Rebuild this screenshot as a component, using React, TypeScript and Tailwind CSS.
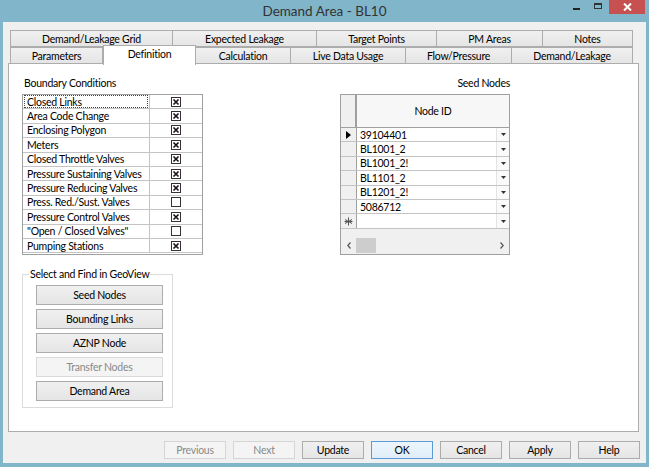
import React from "react";

const rowTabs = [
  { label: "Demand/Leakage Grid", w: 163 },
  { label: "Expected Leakage", w: 145 },
  { label: "Target Points", w: 121 },
  { label: "PM Areas", w: 107 },
  { label: "Notes", w: 91 },
];

const frontTabs = [
  { label: "Parameters", w: 93 },
  { label: "Definition", w: 93, active: true },
  { label: "Calculation", w: 96 },
  { label: "Live Data Usage", w: 116 },
  { label: "Flow/Pressure", w: 107 },
  { label: "Demand/Leakage", w: 122 },
];

const conditions: [string, boolean][] = [
  ["Closed Links", true],
  ["Area Code Change", true],
  ["Enclosing Polygon", true],
  ["Meters", true],
  ["Closed Throttle Valves", true],
  ["Pressure Sustaining Valves", true],
  ["Pressure Reducing Valves", true],
  ["Press. Red./Sust. Valves", false],
  ["Pressure Control Valves", true],
  ['"Open / Closed Valves"', false],
  ["Pumping Stations", true],
];

const seedNodes = ["39104401", "BL1001_2", "BL1001_2!", "BL1101_2", "BL1201_2!", "5086712"];

function CheckBox({ checked }: { checked: boolean }) {
  return (
    <svg width="10" height="10" viewBox="0 0 10 10">
      <rect x="0.5" y="0.5" width="9" height="9" fill="#fff" stroke="#333" />
      {checked && (
        <path d="M2.5 2.5 L7.5 7.5 M7.5 2.5 L2.5 7.5" stroke="#1a0a1a" strokeWidth="1.6" />
      )}
    </svg>
  );
}

function Tab({ label, w, active }: { label: string; w: number; active?: boolean }) {
  if (active) {
    return (
      <div
        className="relative z-10 -mt-[2px] -mb-[1px] flex h-[20px] items-start justify-center border border-b-0 border-[#ACACAC] bg-white pt-[1px]"
        style={{ width: w }}
      >
        {label}
      </div>
    );
  }
  return (
    <div
      className="-ml-px flex h-[17px] items-center justify-center border border-[#ACACAC] bg-gradient-to-b from-[#F0F0F0] to-[#E5E5E5] first:ml-0"
      style={{ width: w }}
    >
      {label}
    </div>
  );
}

function WinButton({ label, disabled, primary }: { label: string; disabled?: boolean; primary?: boolean }) {
  const cls = disabled
    ? "border-[#D5D5D5] bg-[#F4F4F4] text-[#8A8A8A]"
    : primary
      ? "border-[#5A9BD5] bg-gradient-to-b from-[#EDF5FC] to-[#E0EEF9] text-black"
      : "border-[#ACACAC] bg-gradient-to-b from-[#F0F0F0] to-[#E5E5E5] text-black";
  return (
    <div className={`flex h-[18px] w-[62px] items-center justify-center border ${cls}`}>{label}</div>
  );
}

function GroupButton({ label, disabled }: { label: string; disabled?: boolean }) {
  return (
    <div
      className={`flex h-[20px] w-[127px] items-center justify-center border ${
        disabled
          ? "border-[#D9D9D9] bg-[#F4F4F4] text-[#8A8A8A]"
          : "border-[#ACACAC] bg-gradient-to-b from-[#F0F0F0] to-[#E5E5E5] text-black"
      }`}
    >
      {label}
    </div>
  );
}

function DropArrow() {
  return (
    <div className="flex w-[13px] items-center justify-center border-l border-[#E3E3E3] bg-[#FAFAFA]">
      <svg width="5" height="3" viewBox="0 0 5 3">
        <path d="M0 0 H5 L2.5 3 Z" fill="#333" />
      </svg>
    </div>
  );
}

export default function App() {
  return (
    <div className="flex h-[467px] w-[649px] flex-col whitespace-nowrap bg-[#80B5CA] font-['Lato','Liberation_Sans',sans-serif] text-[10.5px] leading-[14px] tracking-[-0.25px] text-black">
      {/* title bar */}
      <div className="relative flex h-[22px] items-center justify-center">
        <span className="text-[13.5px] tracking-normal text-[#333]">Demand Area - BL10</span>
        <div className="absolute right-[4px] top-0 flex items-start">
          <div className="mt-[8px] h-[2px] w-[7px] bg-[#222]" />
          <div className="ml-[14px] mt-[3px] h-[6px] w-[8px] border border-t-2 border-[#333]" />
          <div className="ml-[7px] flex h-[14px] w-[36px] items-center justify-center bg-[#C75050]">
            <svg width="9" height="8" viewBox="0 0 9 8">
              <path d="M1 0.5 L8 7.5 M8 0.5 L1 7.5" stroke="#fff" strokeWidth="2" />
            </svg>
          </div>
        </div>
      </div>

      {/* client */}
      <div className="mx-[3px] mb-[4px] flex flex-1 flex-col bg-[#F0F0F0]">
        <div className="ml-[7px] mt-[8px] flex">
          {rowTabs.map((t) => (
            <Tab key={t.label} {...t} />
          ))}
        </div>
        <div className="ml-[7px] flex items-end">
          {frontTabs.map((t) => (
            <Tab key={t.label} {...t} />
          ))}
        </div>

        {/* tab page */}
        <div className="ml-[5px] -mt-px flex h-[369px] w-[631px] border border-[#ACACAC] bg-white pl-[13px] pt-[12px]">
          <div className="flex w-[181px] flex-col">
            <div className="pl-[2px]">Boundary Conditions</div>
            <div className="mt-[4px] flex flex-col border border-[#A0A0A0] pb-[1px]">
              {conditions.map(([name, on], i) => (
                <div key={name} className="flex h-[14.4px] border-b border-[#C4C4C4]">
                  <div className="flex w-[127px] items-center border-r border-[#C4C4C4] pl-[4px]">
                    {i === 0 ? (
                      <div className="-ml-[3px] flex h-full w-[124px] items-center border border-dotted border-[#444] pl-[2px]">
                        {name}
                      </div>
                    ) : (
                      name
                    )}
                  </div>
                  <div className="flex flex-1 items-center justify-center">
                    <CheckBox checked={on} />
                  </div>
                </div>
              ))}
            </div>

            <fieldset className="mt-[12px] w-[151px] border border-[#DCDCDC] pb-[6px]">
              <legend className="ml-[6px] px-[1px] leading-[14px]">Select and Find in GeoView</legend>
              <div className="mt-[4px] flex flex-col gap-[4px] pl-[13px]">
                <GroupButton label="Seed Nodes" />
                <GroupButton label="Bounding Links" />
                <GroupButton label="AZNP Node" />
                <GroupButton label="Transfer Nodes" disabled />
                <GroupButton label="Demand Area" />
              </div>
            </fieldset>
          </div>

          <div className="ml-[137px] flex w-[170px] flex-col">
            <div className="text-right">Seed Nodes</div>
            <div className="mt-[4px] flex flex-col border border-[#A0A0A0]">
              <div className="flex h-[33px] border-b border-[#A0A0A0]">
                <div className="w-[16px] border-r-2 border-[#A0A0A0] bg-[#F0F0F0]" />
                <div className="flex flex-1 items-center justify-center bg-[#F7F7F7]">Node ID</div>
              </div>
              {[...seedNodes, ""].map((n, i) => (
                <div key={i} className="flex h-[14.4px] border-b border-[#C4C4C4]">
                  <div className="flex w-[16px] items-center justify-center border-r border-[#A0A0A0] bg-[#F0F0F0]">
                    {i === 0 && (
                      <svg width="5" height="8" viewBox="0 0 5 8">
                        <path d="M0 0 L5 4 L0 8 Z" fill="#000" />
                      </svg>
                    )}
                    {i === seedNodes.length && (
                      <svg width="9" height="9" viewBox="0 0 9 9">
                        <path
                          d="M4.5 0.5 V8.5 M1 2.5 L8 6.5 M8 2.5 L1 6.5 M0.5 4.5 H8.5"
                          stroke="#555"
                          strokeWidth="1"
                        />
                      </svg>
                    )}
                  </div>
                  <div className="flex flex-1 items-center pl-[3px]">{n}</div>
                  <DropArrow />
                </div>
              ))}
              <div className="h-[8px] bg-[#F0F0F0]" />
              <div className="flex h-[17px] items-center bg-[#F0F0F0]">
                <div className="flex w-[15px] justify-center">
                  <svg width="4" height="7" viewBox="0 0 4 7">
                    <path d="M3.5 0.5 L0.8 3.5 L3.5 6.5" fill="none" stroke="#555" strokeWidth="1.2" />
                  </svg>
                </div>
                <div className="h-[15px] w-[20px] bg-[#CDCDCD]" />
                <div className="flex-1" />
                <div className="flex w-[14px] justify-center">
                  <svg width="4" height="7" viewBox="0 0 4 7">
                    <path d="M0.5 0.5 L3.2 3.5 L0.5 6.5" fill="none" stroke="#555" strokeWidth="1.2" />
                  </svg>
                </div>
              </div>
            </div>
          </div>
        </div>

        {/* bottom buttons */}
        <div className="mt-[9px] flex justify-end gap-[7px] pr-[6px]">
          <WinButton label="Previous" disabled />
          <WinButton label="Next" disabled />
          <WinButton label="Update" />
          <WinButton label="OK" primary />
          <WinButton label="Cancel" />
          <WinButton label="Apply" />
          <WinButton label="Help" />
        </div>
      </div>
    </div>
  );
}
